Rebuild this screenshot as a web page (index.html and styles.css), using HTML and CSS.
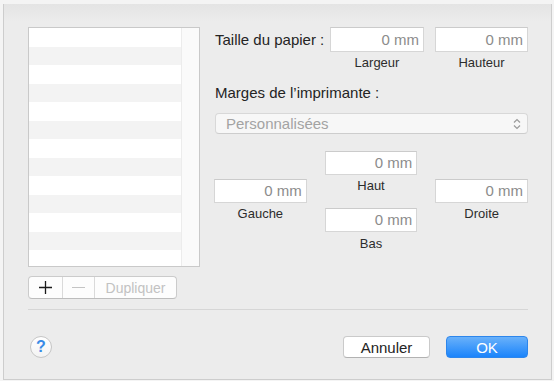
FILE: index.html
```html
<!DOCTYPE html>
<html lang="fr">
<head>
<meta charset="utf-8">
<title>Formats de papier personnalisés</title>
<link rel="stylesheet" href="styles.css">
</head>
<body>
<div class="window">
  <div class="main">
    <div class="left">
      <div class="list">
        <div class="rows">
          <div class="row"></div><div class="row alt"></div><div class="row"></div><div class="row alt"></div>
          <div class="row"></div><div class="row alt"></div><div class="row"></div><div class="row alt"></div>
          <div class="row"></div><div class="row alt"></div><div class="row"></div><div class="row alt"></div>
          <div class="row"></div>
        </div>
        <div class="scroll"></div>
      </div>
      <div class="seg">
        <span class="seg-btn plus"><svg width="13" height="13" viewBox="0 0 13 13"><path d="M6.5 0v13M0 6.5h13" stroke="#1a1a1a" stroke-width="1.3"/></svg></span>
        <span class="seg-btn minus"><svg width="13" height="13" viewBox="0 0 13 13"><path d="M0 6.5h13" stroke="#c4c4c4" stroke-width="1.2"/></svg></span>
        <span class="seg-btn dup">Dupliquer</span>
      </div>
    </div>
    <div class="right">
      <div class="size-row">
        <span class="label size-label">Taille du papier :</span>
        <div class="fcol w94"><div class="field">0 mm</div><div class="sub">Largeur</div></div>
        <div class="fcol w93"><div class="field">0 mm</div><div class="sub">Hauteur</div></div>
      </div>
      <div class="label margins-label">Marges de l’imprimante :</div>
      <div class="popup">
        <span>Personnalisées</span>
        <svg width="8" height="12" viewBox="0 0 8 12"><path d="M1 4.5L4 1.5L7 4.5M1 7.5L4 10.5L7 7.5" fill="none" stroke="#9a9a9a" stroke-width="1.2"/></svg>
      </div>
      <div class="margins">
        <div class="mcol side"><div class="field mf">0 mm</div><div class="sub">Gauche</div></div>
        <div class="mcol mid">
          <div class="field mf">0 mm</div><div class="sub">Haut</div>
          <div class="field mf second">0 mm</div><div class="sub bas">Bas</div>
        </div>
        <div class="mcol side"><div class="field mf">0 mm</div><div class="sub">Droite</div></div>
      </div>
    </div>
  </div>
  <div class="sep"></div>
  <div class="footer">
    <span class="help">?</span>
    <span class="spacer"></span>
    <span class="btn cancel">Annuler</span>
    <span class="btn ok">OK</span>
  </div>
</div>
</body>
</html>
```
FILE: styles.css
```css
html, body {
  margin: 0;
  padding: 0;
}
body {
  background: #f4f4f4;
  font-family: "Liberation Sans", Arial, sans-serif;
  font-size: 15px;
  color: #262626;
  width: 554px;
  height: 381px;
  overflow: hidden;
}
.window {
  margin: 4px 0 0 3px;
  width: 549px;
  height: 376px;
  box-sizing: border-box;
  border: 1px solid #cdcdcd;
  border-top: none;
  background: linear-gradient(#e4e4e4 0, #ececec 18px, #ececec 100%);
}
.main {
  display: flex;
  gap: 15px;
  padding: 23px 0 0 24px;
}
.left {
  width: 172px;
  display: flex;
  flex-direction: column;
}
.list {
  height: 240px;
  box-sizing: border-box;
  border: 1px solid #c9c9c9;
  background: #fff;
  display: flex;
  overflow: hidden;
}
.rows {
  width: 152px;
}
.row {
  height: 18.5px;
  background: #fff;
}
.row.alt {
  background: #f3f3f3;
}
.scroll {
  flex: 1;
  border-left: 1px solid #ececec;
  background: #fafafa;
}
.seg {
  margin-top: 9px;
  height: 23px;
  width: 149px;
  display: flex;
  box-sizing: border-box;
  border: 1px solid #cbcbcb;
  border-bottom-color: #bdbdbd;
  border-radius: 4px;
  background: #fdfdfd;
  overflow: hidden;
}
.seg-btn {
  display: flex;
  align-items: center;
  justify-content: center;
  height: 100%;
  border-right: 1px solid #dadada;
}
.plus { width: 33px; }
.minus { width: 31px; }
.dup {
  flex: 1;
  border-right: none;
  color: #c2c2c2;
  font-size: 14px;
}
.right {
  width: 313px;
}
.size-row {
  display: flex;
  align-items: flex-start;
}
.label {
  font-size: 15px;
  line-height: 18px;
  color: #242424;
}
.size-label {
  width: 115px;
  padding-top: 4px;
  white-space: nowrap;
}
.fcol.w94 { width: 94px; }
.fcol.w93 { width: 93px; margin-left: 11px; }
.field {
  height: 25px;
  box-sizing: border-box;
  background: #fff;
  border: 1px solid #d6d6d6;
  border-top-color: #cbcbcb;
  color: #8c8c8c;
  font-size: 15px;
  text-align: right;
  padding: 0 4px 0 0;
  line-height: 23px;
}
.sub {
  margin-top: 3px;
  font-size: 13px;
  line-height: 15px;
  text-align: center;
  color: #2c2c2c;
}
.sub.bas {
  margin-top: 4px;
}
.margins-label {
  margin-top: 14px;
}
.popup {
  margin-top: 11px;
  height: 21px;
  box-sizing: border-box;
  border: 1px solid #d8d8d8;
  border-bottom-color: #cdcdcd;
  border-radius: 4px;
  background: #f7f7f7;
  display: flex;
  align-items: center;
  justify-content: space-between;
  padding: 0 6px 0 10px;
  color: #a3a3a3;
  font-size: 15px;
}
.margins {
  display: flex;
  gap: 18px;
  margin-left: -1px;
  align-items: flex-start;
}
.mcol {
  width: 93px;
}
.mcol.side {
  margin-top: 45px;
}
.mcol.mid {
  margin-top: 17px;
}
.field.mf {
  height: 24px;
  line-height: 22px;
}
.field.second {
  margin-top: 15px;
}
.sep {
  margin: 10px 0 0 24px;
  width: 500px;
  height: 1px;
  background: #d6d6d6;
}
.footer {
  display: flex;
  align-items: center;
  padding: 26px 23px 0 26px;
}
.help {
  width: 22px;
  height: 22px;
  box-sizing: border-box;
  border-radius: 50%;
  border: 1px solid #c6c6c6;
  background: linear-gradient(#ffffff, #f3f3f3);
  color: #3a8be6;
  font-size: 16px;
  font-weight: bold;
  display: flex;
  align-items: center;
  justify-content: center;
}
.spacer {
  flex: 1;
}
.btn {
  height: 22px;
  box-sizing: border-box;
  border-radius: 4px;
  display: flex;
  align-items: center;
  justify-content: center;
  font-size: 15px;
}
.cancel {
  width: 87px;
  background: #fff;
  border: 1px solid #cacaca;
  border-bottom-color: #b2b2b2;
  color: #242424;
}
.ok {
  width: 82px;
  margin-left: 16px;
  background: linear-gradient(#69b1fa, #1b84fb);
  border: 1px solid #2d86ec;
  color: #fff;
}
```
